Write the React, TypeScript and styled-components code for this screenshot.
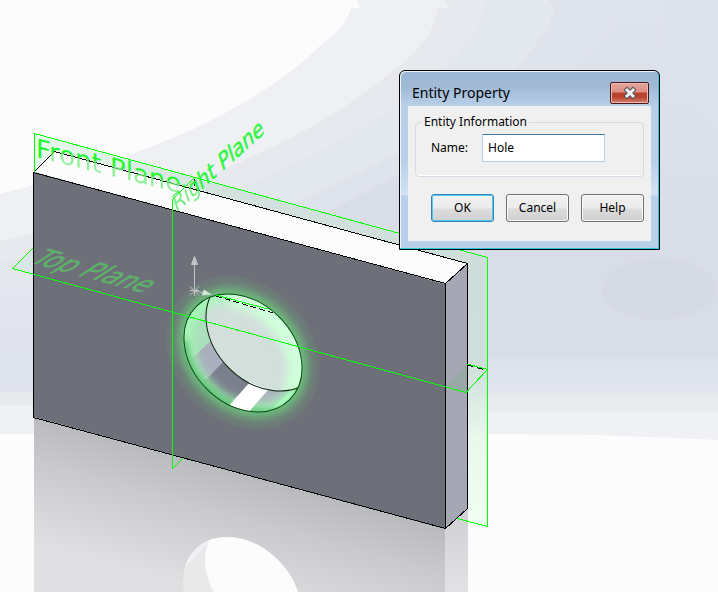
import React, { useState } from "react";
import styled, { createGlobalStyle, css } from "styled-components";

const GlobalStyle = createGlobalStyle`
  body { margin: 0; background: #fcfcfc; }
  *, *::before, *::after { box-sizing: border-box; }
`;

const Viewport = styled.main`
  position: relative;
  min-height: 100vh;
  overflow: hidden;
  font-family: "Noto Sans", "Open Sans", sans-serif;
  font-size: 12px;
  line-height: 16px;
  color: #000;
`;

const Scene = styled.svg`
  display: block;
  width: 100%;
  height: 100vh;
`;

const PlaneLabel = styled.text<{ $size: number }>`
  font-family: "DejaVu Sans", sans-serif;
  font-size: ${(p) => p.$size}px;
`;

const Dialog = styled.form`
  position: absolute;
  top: 70px;
  right: 58px;
  width: 261px;
  display: flex;
  flex-direction: column;
  padding: 0 8px 8px;
  border: 1px solid #000;
  border-radius: 6px 6px 0 0;
  background: linear-gradient(#9bb7d4, #a1bad6 16px, #b8cfe8 35px, #b8d0e9 90px, #d3e2f3 124px, #b8d0e9 125px);
  box-shadow: inset -1px -1px 0 #2cc6e0, inset 1px 1px 0 #edf6fc;
`;

const TitleBar = styled.header`
  display: flex;
  align-items: center;
  justify-content: space-between;
  height: 35px;
  padding: 8px 2px 0 4px;
`;

const Title = styled.h1`
  margin: 0;
  font-size: 14px;
  font-weight: 400;
  line-height: 20px;
`;

const CloseButton = styled.button`
  display: grid;
  place-items: center;
  width: 39px;
  height: 22px;
  padding: 0;
  border: 1px solid #4b1620;
  border-radius: 2px;
  background: linear-gradient(#e2a69c, #dc8f83 9px, #b9432c 10px, #b9432c 14px, #d58370);
  box-shadow: inset 0 0 0 1px #eebbb2;
`;

const Client = styled.div`
  display: flex;
  flex-direction: column;
  gap: 17px;
  padding: 8px 7px 19px;
  background: #f0f0f0;
`;

const Group = styled.fieldset`
  min-width: 0;
  margin: 0;
  padding: 4px 15px 14px;
  border: 1px solid #d5dae6;
  border-radius: 4px;
  box-shadow: inset 0 -1px 0 #fff;
`;

const Legend = styled.legend`
  margin-left: -9px;
  padding: 0 2px;
`;

const Field = styled.div`
  display: flex;
  align-items: center;
`;

const FieldLabel = styled.label`
  flex: 0 0 51px;
`;

const NameInput = styled.input`
  flex: 0 1 123px;
  min-width: 0;
  height: 28px;
  padding: 0 5px 2px;
  border: 1px solid #b0d2ec;
  border-top-color: #3d7bad;
  border-radius: 1px;
  outline: 0;
  background: #fff;
  font: inherit;
`;

const Actions = styled.div`
  display: flex;
  justify-content: flex-end;
  gap: 12px;
`;

const ActionButton = styled.button<{ $primary?: boolean }>`
  width: 63px;
  height: 28px;
  padding: 0;
  border: 1px solid #707070;
  border-radius: 3px;
  background: linear-gradient(#f2f2f2, #ebebeb 13px, #dcdcdc 14px, #cfcfcf);
  box-shadow: inset 0 0 0 1px #fbfbfb;
  font: inherit;
  ${(p) =>
    p.$primary &&
    css`
      border-color: #3c7fb1;
      box-shadow: inset 0 0 0 1px #48cdf3;
    `}
`;

const GREEN = "#00ff00";

function Backdrop() {
  return (
    <g>
      <rect width="718" height="592" fill="url(#sky)" />
      <path d="M718 0H0V330Q180 285 310 220C470 140 590 70 618 20L612 0Z" fill="#dfe3ec" />
      <path d="M0 0H548L554 8Q550 38 500 82C430 140 340 190 220 230Q100 262 0 290Z" fill="#e3e7ee" />
      <path d="M0 0H488L484 8Q484 35 425 85C340 150 240 190 140 225Q70 248 0 262Z" fill="#e7e9ef" />
      <path d="M0 0H444L450 8H437Q438 35 394 70C330 125 240 165 150 199Q75 226 0 241Z" fill="#eff0f4" />
      <path d="M0 0H357L360 8H351Q345 28 323 43C279 88 210 123 170 139Q90 172 0 194Z" fill="#fcfcfc" />
      <path d="M718 0H662L672 8Q650 28 680 80Q696 104 718 128Z" fill="#dde1eb" />
      <ellipse cx="659" cy="289" rx="57" ry="31" fill="#d6dae5" />
      <path d="M0 434H487Q590 433 718 440V592H0Z" fill="#fcfcfc" />
    </g>
  );
}

function Reflection() {
  return (
    <g>
      <path d="M34 417L446 528V592H34Z" fill="url(#floorFront)" />
      <path d="M445 529L468 508V592H445Z" fill="url(#floorSide)" />
      <g clipPath="url(#mirrorHole)">
        <rect x="180" y="530" width="125" height="62" fill="#e9e9ea" />
        <path d="M184 568L210 541V530H180Z" fill="#f0f0f6" />
        <ellipse rx="66" ry="51" transform="translate(264 575) rotate(45)" fill="#fcfcfc" />
      </g>
    </g>
  );
}

function Plate() {
  return (
    <g>
      <path d="M34 172L55 151L467 263L445 284Z" fill="#fcfcfc" />
      <path d="M34 172L445 284V529L34 417Z" fill="#6e7079" />
      <path d="M445 284L467 263V509L445 529Z" fill="#a6a7b5" />
      <path d="M445 387L460 371L467 364V392Z" fill="#98a8a4" />
      <g fill="none" stroke="#000" shapeRendering="crispEdges">
        <path d="M33.5 172.5L445.5 283.5V528.5L33.5 417.5ZM33.5 172.5L54.5 151.5L467.5 263.5V508.5L445.5 528.5M445.5 283.5L467.5 263.5" />
        <path d="M194.5 179V186" />
      </g>
    </g>
  );
}

function Hole() {
  return (
    <g>
      <ellipse rx="84" ry="69" transform="translate(243 353) rotate(45)" fill="#67c877" opacity="0.1" />
      <g filter="url(#glowBlur)">
        <ellipse rx="72" ry="57" transform="translate(243 353) rotate(45)" fill="#6bc87a" opacity="0.9" />
      </g>
      <g clipPath="url(#holeClip)">
        <rect x="180" y="290" width="125" height="125" fill="#a9abb9" />
        <path d="M180 290H222V330L180 370Z" fill="#aadfbb" />
        <path d="M180 371L215 338L226 361L200 386Z" fill="#a9afbd" />
        <path d="M200 386L224 361L252 383L228 404L208 400Z" fill="#7b7f8d" />
        <path d="M247 412L268 389H298L270 414Z" fill="#abb4bd" />
        <path d="M268 412L294 388H306V415Z" fill="#c5f5d2" />
        <g clipPath="url(#backHoleClip)">
          <rect x="195" y="285" width="120" height="120" fill="#d2dfdb" />
        </g>
        <g filter="url(#rimBlur)">
          <ellipse rx="67" ry="52" transform="translate(243 353) rotate(45)" fill="none" stroke="#a5fab8" strokeWidth="18" opacity="0.9" />
        </g>
        <g filter="url(#rimBlur)" clipPath="url(#backHoleClip)">
          <path d="M229 293C262 291 302 332 302 368Q302 382 296 396" fill="none" stroke="#d2ffdc" strokeWidth="28" />
        </g>
        <g filter="url(#softBlur)">
          <path d="M184 340C187 375 217 408 258 412S298 400 300 390" fill="none" stroke="#51ba68" strokeWidth="6" />
        </g>
        <g clipPath="url(#whiteFacet)">
          <path d="M228 407L250 382L268 390L247 414Z" fill="#fff" />
        </g>
        <ellipse rx="66" ry="51" transform="translate(265 332) rotate(45)" fill="none" stroke="#071e0a" />
      </g>
      <ellipse rx="66" ry="51" transform="translate(243 353) rotate(45)" fill="none" stroke="#064a12" />
      <path d="M216 296L273 313" stroke="#000" strokeDasharray="6 3" shapeRendering="crispEdges" />
      <path d="M216 295L268 309" stroke={GREEN} shapeRendering="crispEdges" />
    </g>
  );
}

function ReferencePlanes() {
  return (
    <g fill="none" stroke={GREEN} shapeRendering="crispEdges">
      <path d="M34.5 172V133.5L487.5 257.5V526.5L457 518.5" />
      <path d="M194.5 177.5L172.5 199.5V468.5L183 458" />
      <path d="M33 248L12.5 268.5L466 392.5L487.5 369.5L467 364" />
      <path d="M467.5 365L487 370.5" stroke="#000" strokeDasharray="6 4" />
    </g>
  );
}

function PlaneLabels() {
  return (
    <g>
      <g clipPath="url(#aboveTop)">
        <PlaneLabel $size={26} transform="translate(36 157) skewY(14)" fill="#1ffa2c">Front Plane</PlaneLabel>
      </g>
      <g clipPath="url(#belowTop)">
        <PlaneLabel $size={26} transform="translate(36 157) skewY(14)" fill="#7aed85" opacity="0.8">Front Plane</PlaneLabel>
      </g>
      <g clipPath="url(#rightFar)">
        <PlaneLabel $size={21} transform="translate(176 213) rotate(-42) skewX(-24)" fill="#2df63d" stroke="#2df63d" strokeOpacity="0.4">Right Plane</PlaneLabel>
      </g>
      <g clipPath="url(#rightNear)">
        <PlaneLabel $size={21} transform="translate(176 213) rotate(-42) skewX(-24)" fill="#5fe96c" opacity="0.85">Right Plane</PlaneLabel>
      </g>
      <PlaneLabel $size={25} transform="translate(28 262) rotate(15) skewX(-42)" fill="#53b561" stroke="#7fb08b" strokeOpacity="0.3">Top Plane</PlaneLabel>
    </g>
  );
}

function Origin() {
  return (
    <g fill="#c4c4c6" stroke="#c4c4c6">
      <path d="M194.5 291V264M190 286.5L199 295.5M199 286.5L190 295.5M190 290.5H199M194.5 286V296M195 291L204 293" fill="none" />
      <path d="M194.5 256.5L191.500 264.500H197.500Z" />
      <path d="M204 290L211 294.500L202 295Z" fill="#d3edd9" stroke="#c3dac8" />
    </g>
  );
}

function ModelScene() {
  return (
    <Scene viewBox="0 0 718 592" preserveAspectRatio="xMinYMin slice" role="img" aria-label="Plate with a highlighted hole">
      <defs>
        <linearGradient id="sky" x1="0" y1="0" x2="0" y2="592" gradientUnits="userSpaceOnUse">
          <stop offset="0" stopColor="#dfe3ec" />
          <stop offset="0.15" stopColor="#dce1eb" />
          <stop offset="0.4" stopColor="#d9dde8" />
          <stop offset="0.6" stopColor="#d9dde8" />
          <stop offset="0.61" stopColor="#dce1ec" />
          <stop offset="0.66" stopColor="#e1e5ee" />
          <stop offset="0.67" stopColor="#e9eaee" />
          <stop offset="0.69" stopColor="#eaebee" />
          <stop offset="0.7" stopColor="#f0f1f5" />
          <stop offset="1" stopColor="#f0f1f5" />
        </linearGradient>
        <linearGradient id="skyLeft" x1="0" y1="230" x2="0" y2="440" gradientUnits="userSpaceOnUse">
          <stop offset="0" stopColor="#e9ebf1" />
          <stop offset="0.55" stopColor="#dfe3ed" />
          <stop offset="0.76" stopColor="#dfe3ed" />
          <stop offset="0.78" stopColor="#e6e8ed" />
          <stop offset="0.83" stopColor="#e9eaee" />
          <stop offset="0.84" stopColor="#f0f1f5" />
          <stop offset="1" stopColor="#f0f1f5" />
        </linearGradient>
        <linearGradient id="floorFront" x1="240" y1="472" x2="207" y2="592" gradientUnits="userSpaceOnUse">
          <stop offset="0" stopColor="#b9babe" />
          <stop offset="0.35" stopColor="#c9c8cd" />
          <stop offset="1" stopColor="#e0e0e2" />
        </linearGradient>
        <linearGradient id="floorSide" x1="0" y1="508" x2="0" y2="592" gradientUnits="userSpaceOnUse">
          <stop offset="0" stopColor="#cfd0d4" />
          <stop offset="1" stopColor="#e2e2e5" />
        </linearGradient>
        <linearGradient id="frontPlane" x1="34" y1="0" x2="487" y2="0" gradientUnits="userSpaceOnUse">
          <stop offset="0" stopColor="#e9faec" />
          <stop offset="0.4" stopColor="#d3e2df" />
          <stop offset="1" stopColor="#cfdddb" />
        </linearGradient>
        <linearGradient id="frontPlaneSide" x1="0" y1="257" x2="0" y2="526" gradientUnits="userSpaceOnUse">
          <stop offset="0" stopColor="#cfdddb" />
          <stop offset="0.4" stopColor="#cfdfdb" />
          <stop offset="0.68" stopColor="#eaf8ed" />
          <stop offset="1" stopColor="#f2fdf3" />
        </linearGradient>
        <filter id="glowBlur" x="-30%" y="-30%" width="160%" height="160%"><feGaussianBlur stdDeviation="5" /></filter>
        <filter id="rimBlur" x="-30%" y="-30%" width="160%" height="160%"><feGaussianBlur stdDeviation="5" /></filter>
        <filter id="softBlur" x="-30%" y="-30%" width="160%" height="160%"><feGaussianBlur stdDeviation="3" /></filter>
        <clipPath id="holeClip"><ellipse rx="66" ry="51" transform="translate(243 353) rotate(45)" /></clipPath>
        <clipPath id="backHoleClip"><ellipse rx="66" ry="51" transform="translate(265 332) rotate(45)" /></clipPath>
        <clipPath id="mirrorHole"><ellipse rx="66" ry="51" transform="translate(242 596) rotate(45)" /></clipPath>
        <clipPath id="whiteFacet"><path d="M220 377L252 382Q262 389 280 391V420H220Z" /></clipPath>
        <clipPath id="aboveTop"><path d="M34 120H200V190L55 151L34 172Z" /></clipPath>
        <clipPath id="belowTop"><path d="M34 172L55 151L200 190V230H34Z" /></clipPath>
        <clipPath id="rightFar"><path d="M160 110H290V210L198 190L160 180Z" /></clipPath>
        <clipPath id="rightNear"><path d="M160 180L198 190L290 210V230H160Z" /></clipPath>
      </defs>
      <Backdrop />
      <path d="M0 280L34 264V434H0Z" fill="url(#skyLeft)" />
      <path d="M34 133L487 257V300H34Z" fill="url(#frontPlane)" />
      <path d="M467 252L487 257V526L457 518Z" fill="url(#frontPlaneSide)" />
      <path d="M12 269L34 248V275Z" fill="#d8e7e3" />
      <Reflection />
      <Plate />
      <Hole />
      <PlaneLabels />
      <ReferencePlanes />
      <Origin />
    </Scene>
  );
}

function CloseIcon() {
  return (
    <svg width="16" height="14" viewBox="0 0 16 14" aria-hidden="true">
      <path d="M5 4L11 10M11 4L5 10" stroke="#53525f" strokeWidth="5" strokeLinecap="square" />
      <path d="M5 4L11 10M11 4L5 10" stroke="#f3f3f5" strokeWidth="3" strokeLinecap="square" />
    </svg>
  );
}

export default function App() {
  const [name, setName] = useState("Hole");
  return (
    <>
      <GlobalStyle />
      <Viewport>
        <ModelScene />
        <Dialog role="dialog" aria-labelledby="dialog-title" onSubmit={(e) => e.preventDefault()}>
          <TitleBar>
            <Title id="dialog-title">Entity Property</Title>
            <CloseButton type="button" aria-label="Close"><CloseIcon /></CloseButton>
          </TitleBar>
          <Client>
            <Group>
              <Legend>Entity Information</Legend>
              <Field>
                <FieldLabel htmlFor="entity-name">Name:</FieldLabel>
                <NameInput id="entity-name" value={name} onChange={(e) => setName(e.target.value)} />
              </Field>
            </Group>
            <Actions>
              <ActionButton type="submit" $primary>OK</ActionButton>
              <ActionButton type="button">Cancel</ActionButton>
              <ActionButton type="button">Help</ActionButton>
            </Actions>
          </Client>
        </Dialog>
      </Viewport>
    </>
  );
}
